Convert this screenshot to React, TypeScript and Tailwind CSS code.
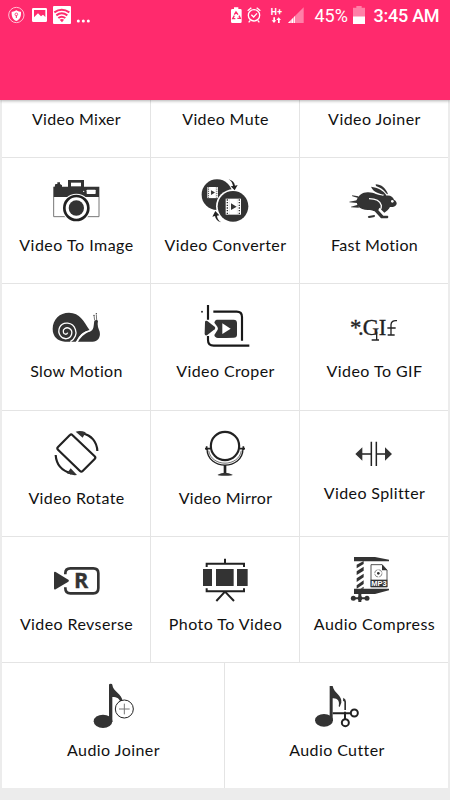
import type { ReactNode } from "react";
import clsx from "clsx";

type Tool = {
  label: string;
  icon: ReactNode;
  tracking: string;
};

const INK = "#333333";

function Icon({ children, height = 150 }: { children: ReactNode; height?: number }) {
  return (
    <svg
      viewBox={`0 0 150 ${height}`}
      className={clsx("w-[50px] shrink-0", height === 150 ? "h-[50px]" : "h-[45px]")}
      fill={INK}
      aria-hidden
    >
      {children}
    </svg>
  );
}

function FilmStrip({ x, y, size }: { x: number; y: number; size: number }) {
  const s = size / 46;
  return (
    <g transform={`translate(${x} ${y}) scale(${s})`}>
      <rect width="46" height="48" fill="#fff" />
      <path d="M5 2v44M41 2v44" stroke={INK} strokeWidth="4" strokeDasharray="4 4" />
      <path d="M11 0v48M35 0v48" stroke={INK} strokeWidth="1" opacity=".3" />
      <path d="M16 14l17 10-17 10z" />
    </g>
  );
}

function CameraIcon() {
  return (
    <Icon>
      <path d="M51 9h48v20h46v31H7V29h4l2-8h6v-5h8v5l6 4v4h18z" />
      <path d="M60 17h30v11H60z" fill="#fff" />
      <rect x="107" y="38" width="27" height="13" rx="2" fill="#fff" />
      <circle cx="98" cy="43" r="2" fill="#fff" />
      <path d="M8 60v59h136V60" fill="#fff" stroke="#777" strokeWidth="3" />
      <circle cx="76" cy="93" r="43" fill="#fff" />
      <circle cx="76" cy="93" r="36" fill="#fff" stroke="#222" strokeWidth="8" />
      <circle cx="76" cy="93" r="23" />
    </Icon>
  );
}

function ConverterIcon() {
  return (
    <Icon>
      <circle cx="51" cy="53" r="46" />
      <FilmStrip x={22} y={30} size={32} />
      <circle cx="99" cy="88" r="51" fill="#fff" />
      <circle cx="99" cy="88" r="46" />
      <FilmStrip x={77} y={65} size={46} />
      <path d="M86 7q16 4 19 19l8-2-9 16-12-12 7-1q-2-13-13-20z" fill="#222" />
      <path d="M64 136q-17-4-19-19l-8 2 9-17 12 13-7 1q1 13 13 20z" fill="#222" />
    </Icon>
  );
}

function RabbitIcon() {
  return (
    <Icon>
      <path d="M22 72C27 54 42 45 58 46c18 1 28 9 44 10l4-3C92 51 72 45 66 29c20 3 37 10 47 27 11-2 19 5 22 12 7 4 10 10 7 15-3 6-11 8-19 7-4 8-10 13-17 17L91 92l-3 8 15 16h13c4 3 2 8-4 8H96L77 103c-6-2-10-5-17-4-12 1-26-3-34-12z" />
      <path d="M60 65c18 0 33 6 37 20 1 6-1 11-5 17" fill="none" stroke="#fff" strokeWidth="4" />
      <path d="M80 22c17 0 31 12 37 30-4-1-6-3-8-6-7-9-16-15-28-19z" />
      <path d="M59 117l17-3c4 2 2 6-3 7l-12 2c-5-1-6-4-2-6z" />
      <path d="M28 58l-19-3 1 3 18 5zM24 70L1 74v2l23 2zM27 83L6 89v2l24 1z" />
      <circle cx="130" cy="73" r="4" fill="#fff" />
    </Icon>
  );
}

function SnailIcon() {
  return (
    <Icon>
      <path d="M42 116C20 115 5 100 5 78 5 49 26 29 54 29c33 0 44 26 62 53-18 2-30 15-39 34z" />
      <path d="M81 116c11-18 25-27 39-32 10-5 8-24 10-30 4-5 10-4 11 1-2 9-1 17 3 26 7 13 1 35-19 35z" />
      <path d="M131 52l-2-15M137 52l-1-17" fill="none" stroke={INK} strokeWidth="2" />
      <circle cx="129" cy="37" r="2" />
      <circle cx="136" cy="32" r="2" />
      <path
        d="M58 116c15-9 20-24 15-37C66 57 35 54 26 73c-8 18 5 36 21 34 16-2 21-24 8-31-10-5-20 3-18 11 1 8 11 9 13 2"
        fill="none"
        stroke="#fff"
        strokeWidth="4"
      />
      <path d="M76 118c11-24 25-32 42-35" fill="none" stroke="#fff" strokeWidth="4" />
    </Icon>
  );
}

function CropIcon() {
  return (
    <Icon>
      <g fill="none" stroke="#181818" strokeWidth="6.5">
        <path d="M24 6v44M40 26h70q16 0 16 16v71M24 99v12q0 17 17 17h107" />
      </g>
      <circle cx="6" cy="26" r="3" />
      <path d="M50 50h51q10 0 10 10v35q0 9-10 9l-23 1H54q-10-1-11-9l10-16q2-5-1-9l-9-12q1-8 7-9z" />
      <path d="M15 57q1-6 7-3l22 17q4 4 0 8L21 97q-7 2-7-5z" />
      <path d="M67 61l25 16-25 16z" fill="#fff" />
    </Icon>
  );
}

function GifIcon() {
  return (
    <Icon>
      <text
        x="3 27 41 89"
        y="96"
        fontSize="68"
        fontFamily="'Liberation Serif', serif"
        fill="#222"
        stroke="#222"
        strokeWidth="1"
      >
        *.GI
      </text>
      <path
        d="M83 86v23M68 111h22M144 53q-17-2-18 12v32M116 96h21M115 75h25"
        fill="none"
        stroke="#222"
        strokeWidth="4"
      />
    </Icon>
  );
}

function RotateIcon() {
  return (
    <Icon>
      <g fill="none" stroke="#222" strokeWidth="6.5" strokeLinejoin="round">
        <path d="M56 16q4-5 8-1l67 64q4 4 0 8l-36 36q-4 4-8 0L21 59q-4-4 0-8z" />
        <path d="M94 10c27 5 44 26 45 53M14 75c2 29 20 48 47 55" />
      </g>
      <path d="M74 5q14-5 30 2l-9 16zM78 135q-16 2-30-5l11-15z" />
    </Icon>
  );
}

function MirrorIcon() {
  return (
    <Icon>
      <g fill="none" stroke="#222">
        <circle cx="75" cy="48" r="42.5" strokeWidth="6.5" />
        <path d="M21 56c1 66 107 66 108 0" strokeWidth="4" />
        <path d="M26 62c8 50 90 50 98 0" strokeWidth="2" />
        <path d="M15 56h15M120 56h15M20 49v11M130 49v11" strokeWidth="5" />
        <path d="M75 105v27" strokeWidth="8" />
      </g>
      <path d="M53 134q11-6 22-6t23 6q0 3-23 3t-22-3z" />
    </Icon>
  );
}

function SplitterIcon() {
  return (
    <Icon height={135}>
      <path d="M67 35v73M82 35v73M38 72h29M82 72h29" stroke="#222" strokeWidth="4.5" />
      <path d="M19 72l21-20v40zM129 72l-21-20v40z" />
    </Icon>
  );
}

function ReverseIcon() {
  return (
    <Icon>
      <path
        d="M43 55v-3q0-15 15-15h69q15 0 15 15v44q0 16-15 16H58q-15 0-15-16v-2"
        fill="none"
        stroke={INK}
        strokeWidth="8"
      />
      <path d="M9 51q0-5 5-3l38 23q4 3 0 6L14 100q-5 2-5-3z" />
      <text x="69" y="97" fontSize="65" fontWeight="700" fontFamily="'Open Sans', sans-serif" stroke={INK} strokeWidth="1">R</text>
    </Icon>
  );
}

function ProjectorIcon() {
  return (
    <Icon>
      <path d="M9 39h27v51H9zM48 39h53v51H48zM111 39h32v51h-32z" />
      <path
        d="M20 33V23h112v10M75 23V8M20 97v9h112v-9M75 107l-26 28M75 107l27 28"
        fill="none"
        stroke="#222"
        strokeWidth="6"
      />
    </Icon>
  );
}

function CompressIcon() {
  return (
    <Icon>
      <path d="M15 3h63l42 8v5H15zM15 98h105v5l-42 11H15z" />
      <path d="M23 26l21-11v9L23 37zM23 46l21-14v12L23 57zM23 67l21-14v11L23 78zM23 88l21-15v11L23 98zM34 98l10-6v6z" />
      <path d="M28 112h9v26h-9zM14 124h40v6H14z" />
      <circle cx="13" cy="127" r="7.5" />
      <circle cx="54" cy="127" r="7.5" />
      <circle cx="33" cy="127" r="7" />
      <path d="M66 93V26h33l15 16v51" fill="#fff" stroke={INK} strokeWidth="2.5" />
      <path d="M99 25v18h16z" />
      <circle cx="88" cy="52" r="11" fill="none" stroke="#555" strokeWidth="2" strokeDasharray="14 3" />
      <circle cx="88" cy="52" r="4" />
      <path d="M65 71h50v23H65z" />
      <text
        x="67"
        y="91"
        fontSize="23"
        fontWeight="700"
        fontFamily="'Liberation Sans', sans-serif"
        fill="#fff"
        textLength="46"
        lengthAdjust="spacingAndGlyphs"
      >
        MP3
      </text>
    </Icon>
  );
}

function AudioJoinerIcon() {
  return (
    <Icon>
      <ellipse cx="45" cy="118" rx="28" ry="20" />
      <path d="M63 8q0-3 5-3t5 3c2 21 29 26 31 50l-7 5c-1-13-10-18-24-18v75H63z" />
      <circle cx="109" cy="81" r="27" fill="#fff" stroke="#222" strokeWidth="3" />
      <path d="M93 81h32M109 65v32" stroke="#777" strokeWidth="3" />
    </Icon>
  );
}

function AudioCutterIcon() {
  return (
    <Icon>
      <ellipse cx="36" cy="115" rx="27" ry="19" />
      <path d="M53 12h9c4 23 29 27 26 50l-5 13-3-2c4-17-4-25-18-24v67h-9z" />
      <path d="M94 47q8 4 8 12v25h-5V59l-4-3z" />
      <g fill="none" stroke="#222" strokeWidth="6">
        <path d="M62 94h54M99 89v22" />
        <circle cx="127" cy="93" r="10.5" />
        <circle cx="100" cy="122" r="10.5" />
      </g>
    </Icon>
  );
}

const TOP_ROW: Tool[] = [
  { label: "Video Mixer", icon: null, tracking: "tracking-[0.3px]" },
  { label: "Video Mute", icon: null, tracking: "tracking-[0.35px]" },
  { label: "Video Joiner", icon: null, tracking: "tracking-[0.45px]" },
];

const ROWS: { tools: Tool[]; className: string }[] = [
  {
    className: "h-[125px]",
    tools: [
      { label: "Video To Image", icon: <CameraIcon />, tracking: "tracking-[0.5px]" },
      { label: "Video Converter", icon: <ConverterIcon />, tracking: "tracking-[0.4px]" },
      { label: "Fast Motion", icon: <RabbitIcon />, tracking: "tracking-[0.3px]" },
    ],
  },
  {
    className: "h-[126px] *:pt-[18.5px]",
    tools: [
      { label: "Slow Motion", icon: <SnailIcon />, tracking: "tracking-[0.35px]" },
      { label: "Video Croper", icon: <CropIcon />, tracking: "tracking-[0.4px]" },
      { label: "Video To GIF", icon: <GifIcon />, tracking: "tracking-[0.45px]" },
    ],
  },
  {
    className: "h-[125px]",
    tools: [
      { label: "Video Rotate", icon: <RotateIcon />, tracking: "tracking-[0.4px]" },
      { label: "Video Mirror", icon: <MirrorIcon />, tracking: "tracking-[0.3px]" },
      { label: "Video Splitter", icon: <SplitterIcon />, tracking: "tracking-[0.38px]" },
    ],
  },
  {
    className: "h-[125px]",
    tools: [
      { label: "Video Revserse", icon: <ReverseIcon />, tracking: "tracking-[0.4px]" },
      { label: "Photo To Video", icon: <ProjectorIcon />, tracking: "tracking-[0.45px]" },
      { label: "Audio Compress", icon: <CompressIcon />, tracking: "tracking-[0.45px]" },
    ],
  },
];

const AUDIO_ROW: Tool[] = [
  { label: "Audio Joiner", icon: <AudioJoinerIcon />, tracking: "tracking-[0.45px]" },
  { label: "Audio Cutter", icon: <AudioCutterIcon />, tracking: "tracking-[0.4px]" },
];

function ToolCell({ tool }: { tool: Tool }) {
  return (
    <div className={clsx("flex flex-col items-center bg-white", tool.icon ? "pt-[19px]" : "pt-[9px]")}>
      {tool.icon}
      <span
        className={clsx(
          "ml-px whitespace-nowrap text-base leading-5 text-[#111]",
          tool.icon && "mt-2",
          tool.tracking,
        )}
      >
        {tool.label}
      </span>
    </div>
  );
}

function StatusBar() {
  return (
    <div className="flex h-8 items-center text-white">
      <svg viewBox="0 0 285 96" className="h-8 w-[95px] shrink-0" fill="#fff" aria-hidden>
        <circle cx="49" cy="45" r="23" fill="none" stroke="#ffc0d3" strokeWidth="3" />
        <path d="M49 31q7 5 14 4c1 14-3 23-14 28-11-5-15-14-14-28q7 1 14-4z" />
        <circle cx="49" cy="43" r="4" fill="none" stroke="#ff2a6d" strokeWidth="2.5" />
        <path d="M49 46v8" stroke="#ff2a6d" strokeWidth="3" />
        <path fillRule="evenodd" d="M100 24h37q4 0 4 4v34q0 4-4 4h-37q-4 0-4-4V28q0-4 4-4zm2 6v22l12-12 9 9 6-5 7 7V30z" />
        <rect x="159" y="18" width="54" height="54" rx="3" />
        <g fill="none" stroke="#ff2a6d" strokeWidth="6">
          <path d="M163 37q22-16 45 0M169 46q16-12 33 0M175 54q10-8 21 0" />
        </g>
        <path d="M179 59q7-4 13 0l-6 8z" fill="#ff2a6d" />
        <circle cx="235" cy="63" r="4.5" />
        <circle cx="250" cy="63" r="4.5" />
        <circle cx="265" cy="63" r="4.5" />
      </svg>
      <svg viewBox="0 0 246 96" className="ml-[130px] h-8 w-[82px] shrink-0" fill="#fff" aria-hidden>
        <path d="M27 22h13v5h6q4 0 4 4v34q0 4-4 4H22q-4 0-4-4V31q0-4 4-4h5z" />
        <path
          d="M28 44l5-8 6 8M42 47l4 8h-9M31 56h-8l5-9"
          fill="none"
          stroke="#ff2a6d"
          strokeWidth="4"
        />
        <g fill="none" stroke="#fff" strokeWidth="4">
          <circle cx="87" cy="46" r="17" />
          <path d="M79 44l7 7 10-11M68 32l11-9M106 32l-11-9M76 61l-5 6M98 61l5 6" />
        </g>
        <text x="137" y="45" fontSize="26" fontWeight="700" fontFamily="Roboto, sans-serif" textLength="34">H+</text>
        <path d="M145 52h5v9h4l-7 8-7-8h5zM159 69h5v-9h4l-7-8-7 8h5z" />
        <path d="M236 22v47h-47z" opacity=".4" />
        <path d="M210 48v21h-21z" />
        <path d="M198 58v12M206 50v20" stroke="#ff2a6d" strokeWidth="1.5" />
      </svg>
      <span className="ml-[7.5px] w-[35.5px] font-[Roboto,sans-serif] text-[18px] leading-8">45%</span>
      <svg viewBox="0 0 36 96" className="ml-[3px] h-8 w-3 shrink-0" fill="#fff" aria-hidden>
        <path d="M10 18h16v5h10v26H0V23h10z" opacity=".4" />
        <path d="M0 49h36v23H0z" />
      </svg>
      <span className="ml-[8.5px] whitespace-nowrap font-[Roboto,sans-serif] text-[18px] font-medium leading-8 tracking-[-0.25px]">
        3:45 AM
      </span>
    </div>
  );
}

export default function App() {
  return (
    <div className="flex h-[800px] w-[450px] flex-col overflow-hidden bg-[#ececec] font-[Lato,sans-serif]">
      <header className="z-10 h-[100px] shrink-0 bg-[#ff2a6d] shadow-[0_1px_3px_rgba(0,0,0,0.3)]">
        <StatusBar />
      </header>

      <main className="mx-[2px] flex flex-col gap-px bg-[#e4e4e4]">
        <div className="grid h-[57px] grid-cols-[148px_148px_148px] gap-px">
          {TOP_ROW.map((tool) => (
            <ToolCell key={tool.label} tool={tool} />
          ))}
        </div>
        {ROWS.map((row) => (
          <div
            key={row.tools[0].label}
            className={clsx("grid grid-cols-[148px_148px_148px] gap-px", row.className)}
          >
            {row.tools.map((tool) => (
              <ToolCell key={tool.label} tool={tool} />
            ))}
          </div>
        ))}
        <div className="grid h-[125px] grid-cols-[222px_223px] gap-px">
          {AUDIO_ROW.map((tool) => (
            <ToolCell key={tool.label} tool={tool} />
          ))}
        </div>
      </main>
    </div>
  );
}
